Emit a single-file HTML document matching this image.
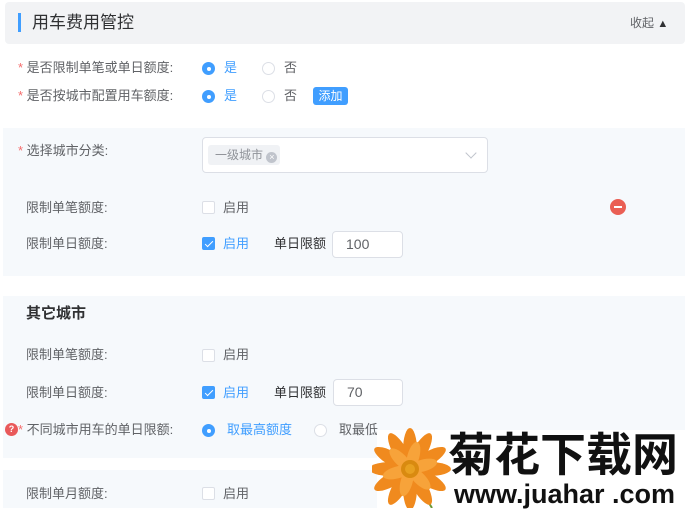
<!DOCTYPE html>
<html><head><meta charset="utf-8"><style>
*{margin:0;padding:0;box-sizing:border-box}
body{width:685px;height:508px;overflow:hidden;background:#fff;position:relative;font-family:"Liberation Sans","Noto Sans CJK SC",sans-serif;font-size:13px;color:#606266}
.a{position:absolute;white-space:nowrap;line-height:16px}
.panel{position:absolute;left:3px;right:0;background:#f6f9fc}
.star{color:#f56c6c}
.radio{position:absolute;width:13px;height:13px;border-radius:50%;border:1px solid #dcdfe6;background:#fff}
.radio.on{background:#409eff;border-color:#409eff}
.radio.on:after{content:"";position:absolute;left:3.5px;top:3.5px;width:4px;height:4px;border-radius:50%;background:#fff}
.cb{position:absolute;width:13px;height:13px;border:1px solid #dcdfe6;border-radius:2px;background:#fff}
.cb.on{background:#409eff;border-color:#409eff}
.cb.on:after{content:"";position:absolute;left:3.5px;top:1px;width:3px;height:7px;border:solid #fff;border-width:0 1.5px 1.5px 0;transform:rotate(45deg)}
.blue{color:#409eff}
.inp{position:absolute;border:1px solid #dcdfe6;border-radius:4px;background:#fff;font-size:14px;color:#606266;padding-left:13px}
</style></head><body>
<div style="position:absolute;left:5px;top:2px;width:680px;height:42px;background:#f2f3f5;border-radius:4px"></div>
<div style="position:absolute;left:18px;top:13px;width:3px;height:19px;background:#409eff"></div>
<div class="a" style="left:32px;top:13px;font-size:17px;line-height:20px;color:#303133">用车费用管控</div>
<div class="a" style="left:630px;top:15px;font-size:12px;color:#606266">收起 <span style="font-size:11px;color:#303133">▲</span></div>

<div class="a" style="left:18px;top:60px"><span class="star">* </span>是否限制单笔或单日额度:</div>
<div class="radio on" style="left:202px;top:62px"></div><div class="a blue" style="left:224px;top:60px">是</div>
<div class="radio" style="left:262px;top:62px"></div><div class="a" style="left:284px;top:60px">否</div>
<div class="a" style="left:18px;top:88px"><span class="star">* </span>是否按城市配置用车额度:</div>
<div class="radio on" style="left:202px;top:90px"></div><div class="a blue" style="left:224px;top:88px">是</div>
<div class="radio" style="left:262px;top:90px"></div><div class="a" style="left:284px;top:88px">否</div>
<div class="a" style="left:313px;top:87px;width:35px;height:18px;line-height:18px;background:#409eff;color:#fff;border-radius:3px;text-align:center;font-size:12px">添加</div>

<div class="panel" style="top:128px;height:148px"></div>
<div class="a" style="left:18px;top:143px"><span class="star">* </span>选择城市分类:</div>
<div class="inp" style="left:202px;top:137px;width:286px;height:36px"></div>
<div class="a" style="left:208px;top:145px;width:72px;height:20px;background:#f0f2f5;border-radius:3px;font-size:12px;line-height:20px;color:#909399;padding-left:7px">一级城市 <span style="display:inline-block;width:11px;height:11px;border-radius:50%;background:#c0c4cc;color:#fff;font-size:9px;line-height:11px;text-align:center;vertical-align:-1px">×</span></div>
<div style="position:absolute;left:467px;top:149px;width:8px;height:8px;border:solid #c0c4cc;border-width:0 1px 1px 0;transform:rotate(45deg)"></div>
<div class="a" style="left:26px;top:200px">限制单笔额度:</div>
<div class="cb" style="left:202px;top:201px"></div><div class="a" style="left:223px;top:200px">启用</div>
<div style="position:absolute;left:610px;top:199px;width:16px;height:16px;border-radius:50%;background:#ea5f54"></div>
<div style="position:absolute;left:614px;top:206px;width:8px;height:2px;background:#fff"></div>
<div class="a" style="left:26px;top:236px">限制单日额度:</div>
<div class="cb on" style="left:202px;top:237px"></div><div class="a blue" style="left:223px;top:236px">启用</div>
<div class="a" style="left:274px;top:236px;color:#303133">单日限额</div>
<div class="inp" style="left:332px;top:231px;width:71px;height:27px;line-height:25px">100</div>

<div class="panel" style="top:296px;height:162px"></div>
<div class="a" style="left:26px;top:306px;font-size:15px;font-weight:bold;color:#303133">其它城市</div>
<div class="a" style="left:26px;top:347px">限制单笔额度:</div>
<div class="cb" style="left:202px;top:349px"></div><div class="a" style="left:223px;top:347px">启用</div>
<div class="a" style="left:26px;top:385px">限制单日额度:</div>
<div class="cb on" style="left:202px;top:386px"></div><div class="a blue" style="left:223px;top:385px">启用</div>
<div class="a" style="left:274px;top:385px;color:#303133">单日限额</div>
<div class="inp" style="left:333px;top:379px;width:70px;height:27px;line-height:25px">70</div>
<div style="position:absolute;left:5px;top:423px;width:13px;height:13px;border-radius:50%;background:#e9595a;color:#fff;font-size:9px;line-height:13px;text-align:center;font-weight:bold">?</div>
<div class="a" style="left:18px;top:422px"><span class="star">*</span> 不同城市用车的单日限额:</div>
<div class="radio on" style="left:202px;top:424px"></div><div class="a blue" style="left:227px;top:422px">取最高额度</div>
<div class="radio" style="left:314px;top:424px"></div><div class="a" style="left:339px;top:422px">取最低</div>

<div class="panel" style="top:470px;height:38px"></div>
<div class="a" style="left:26px;top:486px">限制单月额度:</div>
<div class="cb" style="left:202px;top:487px"></div><div class="a" style="left:223px;top:486px">启用</div>

<div style="position:absolute;left:377px;top:430px;width:308px;height:78px;background:#fff"></div>
<svg style="position:absolute;left:372px;top:425px" width="80" height="83" viewBox="0 0 80 83">
<line x1="40" y1="50" x2="60" y2="83" stroke="#6a9a3a" stroke-width="2"/>
<g transform="translate(38,44)">
<g fill="#f08a1e">
<ellipse rx="7" ry="22" transform="rotate(0) translate(0,-19)"/>
<ellipse rx="7" ry="22" transform="rotate(30) translate(0,-19)"/>
<ellipse rx="7" ry="22" transform="rotate(60) translate(0,-19)"/>
<ellipse rx="7" ry="22" transform="rotate(90) translate(0,-19)"/>
<ellipse rx="7" ry="22" transform="rotate(120) translate(0,-19)"/>
<ellipse rx="7" ry="22" transform="rotate(150) translate(0,-19)"/>
<ellipse rx="7" ry="22" transform="rotate(180) translate(0,-19)"/>
<ellipse rx="7" ry="22" transform="rotate(210) translate(0,-19)"/>
<ellipse rx="7" ry="22" transform="rotate(240) translate(0,-19)"/>
<ellipse rx="7" ry="22" transform="rotate(270) translate(0,-19)"/>
<ellipse rx="7" ry="22" transform="rotate(300) translate(0,-19)"/>
<ellipse rx="7" ry="22" transform="rotate(330) translate(0,-19)"/>
</g>
<g fill="#f7a33a">
<ellipse rx="6" ry="15" transform="rotate(15) translate(0,-13)"/>
<ellipse rx="6" ry="15" transform="rotate(75) translate(0,-13)"/>
<ellipse rx="6" ry="15" transform="rotate(135) translate(0,-13)"/>
<ellipse rx="6" ry="15" transform="rotate(195) translate(0,-13)"/>
<ellipse rx="6" ry="15" transform="rotate(255) translate(0,-13)"/>
<ellipse rx="6" ry="15" transform="rotate(315) translate(0,-13)"/>
</g>
<circle r="9" fill="#d98a10"/><circle r="5" fill="#e8a020"/>
</g></svg>
<div class="a" style="left:448px;top:428px;font-size:46px;line-height:54px;font-weight:bold;color:#111">菊花下载网</div>
<div class="a" style="left:454px;top:481px;font-size:27px;line-height:27px;font-weight:bold;color:#111">www.juahar .com</div>
</body></html>
